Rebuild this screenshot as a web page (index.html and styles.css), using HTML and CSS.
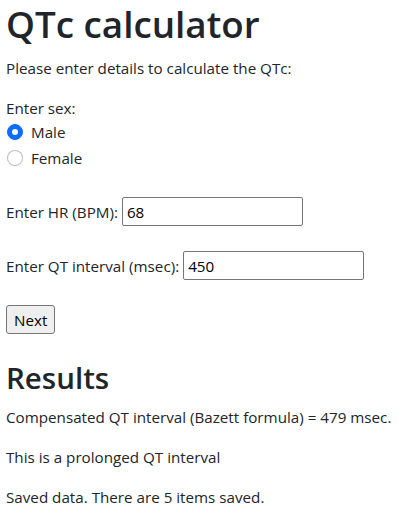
FILE: index.html
```html
<!DOCTYPE html>
<html lang="en">
<head>
<meta charset="utf-8">
<title>QTc calculator</title>
<link rel="stylesheet" href="styles.css">
</head>
<body>
<main class="page">
  <h1 class="title">QTc calculator</h1>
  <p class="intro">Please enter details to calculate the QTc:</p>
  <div class="sex-label">Enter sex:</div>
  <div class="form-check">
    <span class="radio checked"></span>
    <label class="check-label">Male</label>
  </div>
  <div class="form-check">
    <span class="radio"></span>
    <label class="check-label">Female</label>
  </div>
  <div class="field first">
    <label class="field-label">Enter HR (BPM):</label>
    <input class="text-input" type="text" value="68">
  </div>
  <div class="field">
    <label class="field-label">Enter QT interval (msec):</label>
    <input class="text-input" type="text" value="450">
  </div>
  <div class="field">
    <button class="btn" type="button">Next</button>
  </div>
  <h2 class="results-title">Results</h2>
  <p class="result">Compensated QT interval (Bazett formula) = 479 msec.</p>
  <p class="result">This is a prolonged QT interval</p>
  <p class="result">Saved data. There are 5 items saved.</p>
</main>
</body>
</html>
```

FILE: styles.css
```css
html, body {
  margin: 0;
  padding: 0;
  background: #fff;
}
body {
  font-family: "Open Sans", "Noto Sans", sans-serif;
  font-size: 15.2px;
  line-height: 24px;
  color: #212529;
}
.page {
  padding: 0 6px;
}
.title {
  margin: 0 0 8px;
  font-size: 36.8px;
  line-height: 48px;
  font-weight: 600;
}
.intro {
  margin: 0 0 16px;
}
.sex-label {
  height: 24px;
}
.form-check {
  display: flex;
  align-items: flex-start;
  height: 24px;
  margin-bottom: 2px;
}
.radio {
  box-sizing: border-box;
  width: 16px;
  height: 16px;
  margin: 4px 8px 0 1px;
  border-radius: 50%;
  border: 1px solid rgba(0, 0, 0, 0.25);
  background: #fff;
  flex: none;
}
.radio.checked {
  border-color: #0d6efd;
  background: #0d6efd;
  position: relative;
}
.radio.checked::after {
  content: "";
  position: absolute;
  left: 50%;
  top: 50%;
  width: 6px;
  height: 6px;
  margin: -3px 0 0 -3px;
  border-radius: 50%;
  background: #fff;
}
.field {
  display: flex;
  align-items: baseline;
  gap: 4px;
  margin-top: 25px;
  height: 29px;
}
.field.first {
  margin-top: 27px;
}
.text-input {
  box-sizing: border-box;
  width: 181px;
  height: 29px;
  padding: 1px 4px;
  border: 1px solid #767676;
  border-radius: 2px;
  font-family: inherit;
  font-size: 15.2px;
  color: #000;
  background: #fff;
}
.btn {
  box-sizing: border-box;
  height: 29px;
  padding: 1px 7px;
  border: 1px solid #767676;
  border-radius: 3px;
  background: #efefef;
  font-family: inherit;
  font-size: 15.2px;
  color: #000;
}
.results-title {
  margin: 25px 0 8px;
  font-size: 29.5px;
  line-height: 38px;
  font-weight: 600;
}
.result {
  margin: 0 0 16px;
}
```
